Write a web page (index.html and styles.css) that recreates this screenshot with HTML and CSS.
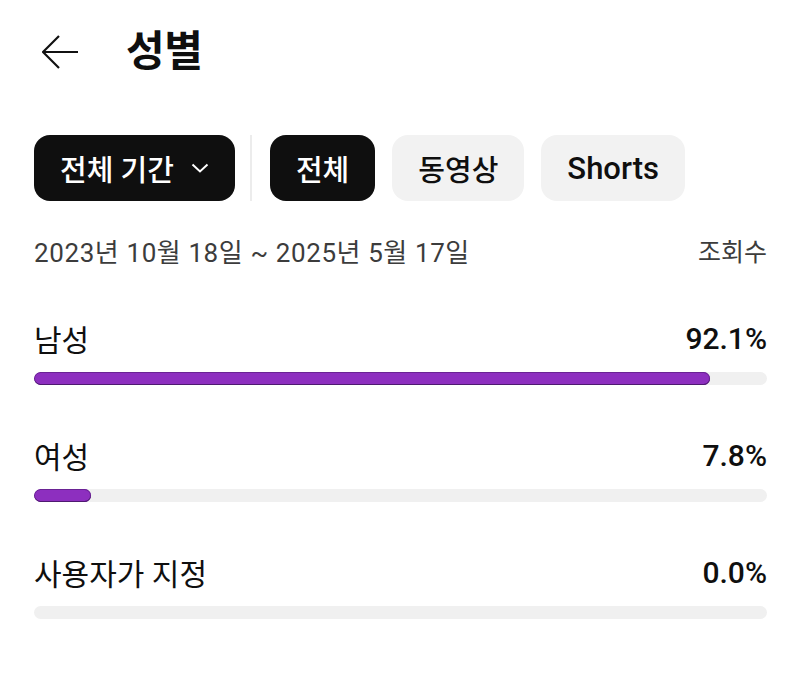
FILE: index.html
```html
<!DOCTYPE html>
<html lang="ko">
<head>
<meta charset="utf-8">
<title>성별</title>
<link rel="stylesheet" href="styles.css">
</head>
<body>
<div class="page">
  <header class="header">
    <svg class="back" width="36" height="34" viewBox="0 0 36 34" aria-hidden="true">
      <path d="M17 1 L1 17 L17 33 M1 17 H36" fill="none" stroke="#111" stroke-width="2.2" stroke-linejoin="miter"/>
    </svg>
    <h1 class="title">성별</h1>
  </header>

  <div class="chips">
    <div class="chip dark period">전체 기간
      <svg class="chev" width="18" height="10" viewBox="0 0 18 10" aria-hidden="true">
        <path d="M1.5 1.5 L9 8.5 L16.5 1.5" fill="none" stroke="#fff" stroke-width="2"/>
      </svg>
    </div>
    <div class="divider"></div>
    <div class="chip dark">전체</div>
    <div class="chip light">동영상</div>
    <div class="chip light latin">Shorts</div>
  </div>

  <div class="daterow">
    <span class="date">2023년 10월 18일 ~ 2025년 5월 17일</span>
    <span>조회수</span>
  </div>

  <div class="rows">
    <div class="row">
      <div class="rowhead"><span class="label">남성</span><span class="value">92.1%</span></div>
      <div class="track"><div class="fill" style="width:92.2%"></div></div>
    </div>
    <div class="row">
      <div class="rowhead"><span class="label">여성</span><span class="value">7.8%</span></div>
      <div class="track"><div class="fill" style="width:7.8%"></div></div>
    </div>
    <div class="row">
      <div class="rowhead"><span class="label">사용자가 지정</span><span class="value">0.0%</span></div>
      <div class="track"><div class="fill" style="width:0%"></div></div>
    </div>
  </div>
</div>
</body>
</html>
```

FILE: styles.css
```css
* { box-sizing: border-box; }
html, body {
  margin: 0;
  padding: 0;
  background: #fff;
}
body {
  font-family: Roboto, "Noto Sans CJK KR", sans-serif;
  color: #0f0f0f;
}
.page {
  padding: 0 33px 0 34px;
}
.header {
  height: 104px;
  display: flex;
  align-items: center;
}
.back {
  margin-left: 8px;
  flex: none;
}
.title {
  margin: 0 0 0 48px;
  font-size: 42px;
  font-weight: 700;
  line-height: 1;
  letter-spacing: -0.3px;
}
.chips {
  margin-top: 31px;
  display: flex;
  align-items: stretch;
  gap: 17px;
  height: 66px;
}
.chip {
  display: flex;
  align-items: center;
  padding: 0 26px;
  border-radius: 16px;
  font-size: 29px;
  font-weight: 500;
  white-space: nowrap;
}
.chip.period {
  padding-right: 28px;
}
.chip.dark {
  background: #0f0f0f;
  color: #fff;
}
.chip.light {
  background: #f2f2f2;
  color: #0f0f0f;
}
.chip.latin {
  font-size: 31px;
}
.chev {
  margin-left: 17px;
  margin-right: -2px;
}
.divider {
  width: 2px;
  margin: 0 1px 0 -2px;
  background: #ececec;
}
.daterow {
  margin-top: 33px;
  height: 32px;
  display: flex;
  justify-content: space-between;
  align-items: center;
  font-size: 25px;
  color: #3c3c3c;
}
.date {
  font-size: 26px;
  letter-spacing: 0.6px;
}
.rows {
  margin-top: 52px;
  display: flex;
  flex-direction: column;
  gap: 50px;
}
.rowhead {
  height: 40px;
  display: flex;
  justify-content: space-between;
  align-items: center;
}
.label {
  font-size: 30px;
}
.value {
  font-size: 30px;
  font-weight: 500;
}
.track {
  margin-top: 14px;
  height: 13px;
  border-radius: 7px;
  background: #f0f0f0;
  overflow: hidden;
}
.fill {
  height: 100%;
  border-radius: 7px;
  background: #8d2fbf;
  box-shadow: inset 0 -1px 0 #4e1a70, inset 0 0 0 1px #6a2394;
}
```
